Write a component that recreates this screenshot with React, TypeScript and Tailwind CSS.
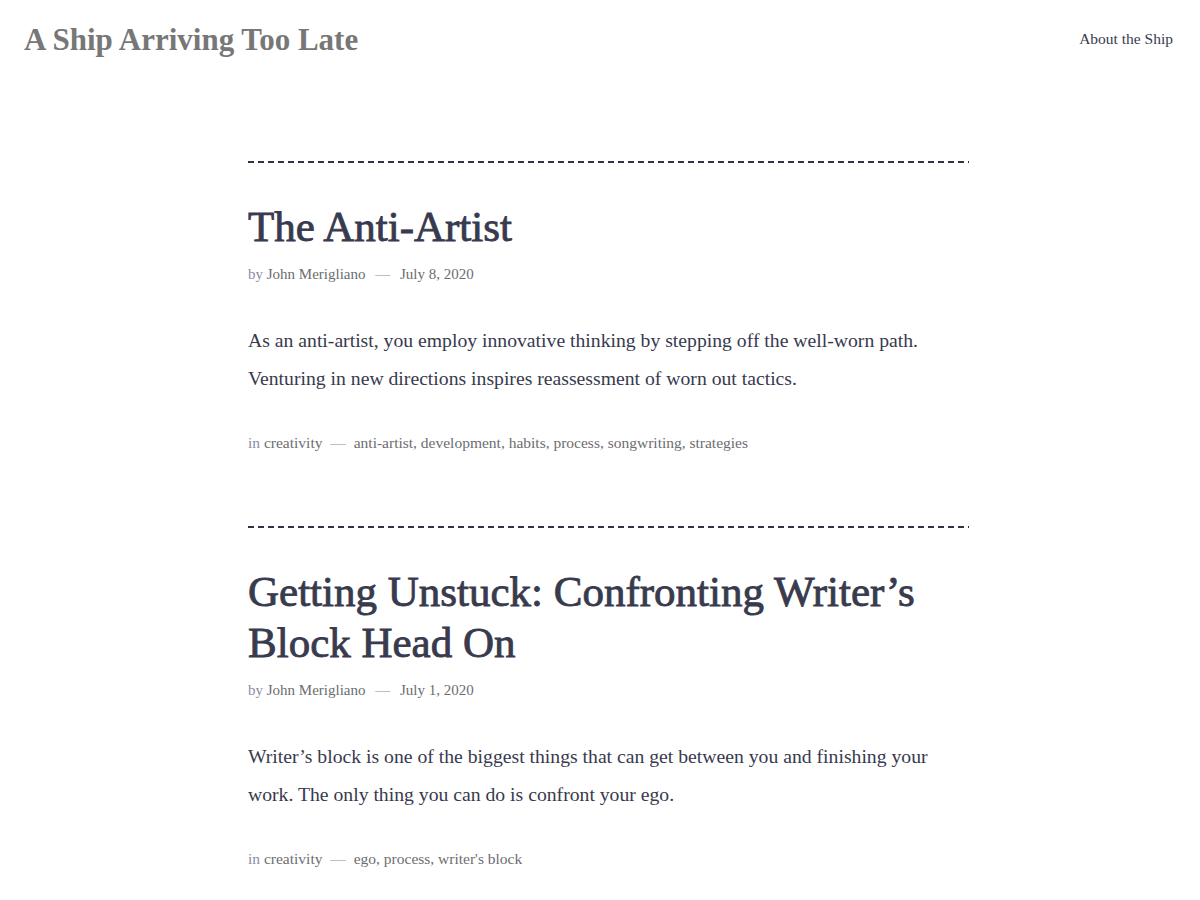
import React from "react";

const serif = { fontFamily: '"Liberation Serif", "Times New Roman", serif' };

type Post = {
  title: string;
  date: string;
  excerpt: string;
  tags: string;
};

const posts: Post[] = [
  {
    title: "The Anti-Artist",
    date: "July 8, 2020",
    excerpt:
      "As an anti-artist, you employ innovative thinking by stepping off the well-worn path. Venturing in new directions inspires reassessment of worn out tactics.",
    tags: "anti-artist, development, habits, process, songwriting, strategies",
  },
  {
    title: "Getting Unstuck: Confronting Writer\u2019s Block Head On",
    date: "July 1, 2020",
    excerpt:
      "Writer\u2019s block is one of the biggest things that can get between you and finishing your work. The only thing you can do is confront your ego.",
    tags: "ego, process, writer's block",
  },
];

function Dashes() {
  return (
    <div className="h-[2px] w-[721px] bg-[repeating-linear-gradient(to_right,#2f3244_0px,#2f3244_6px,transparent_6px,transparent_10px)]" />
  );
}

function Article({ post }: { post: Post }) {
  return (
    <article className="flex flex-col">
      <Dashes />
      <h2 className="mt-[38px] w-[720px] text-[43px] leading-[51px] font-normal text-[#383a4e] [-webkit-text-stroke:0.85px_#383a4e]">
        {post.title}
      </h2>
      <div className="mt-[10px] text-[15px] leading-[24px] text-[#6d6d72]">
        <span className="text-[#8a8ea0]">by</span> John Merigliano{" "}
        <span className="mx-[6px] text-[#8a8ea0]">—</span> {post.date}
      </div>
      <p className="mt-[35px] w-[720px] text-[19.7px] leading-[38px] text-[#383a4e]">
        {post.excerpt}
      </p>
      <div className="mt-[34px] text-[15.5px] leading-[24px] text-[#6d6d72]">
        <span className="text-[#8a8ea0]">in</span> creativity{" "}
        <span className="mx-[4px] text-[#8a8ea0]">—</span> {post.tags}
      </div>
    </article>
  );
}

export default function App() {
  return (
    <div className="min-h-[900px] bg-white" style={serif}>
      <header className="flex items-start justify-between pl-[24px] pr-[27px]">
        <div className="pt-[20px] text-[31px] leading-[40px] font-bold text-[#777777]">
          A Ship Arriving Too Late
        </div>
        <nav className="pt-[27px] text-[15.5px] leading-[24px] text-[#383a4e]">
          About the Ship
        </nav>
      </header>
      <main className="flex flex-col gap-[71px] pl-[248px] pt-[101px]">
        {posts.map((p) => (
          <Article key={p.title} post={p} />
        ))}
      </main>
    </div>
  );
}
